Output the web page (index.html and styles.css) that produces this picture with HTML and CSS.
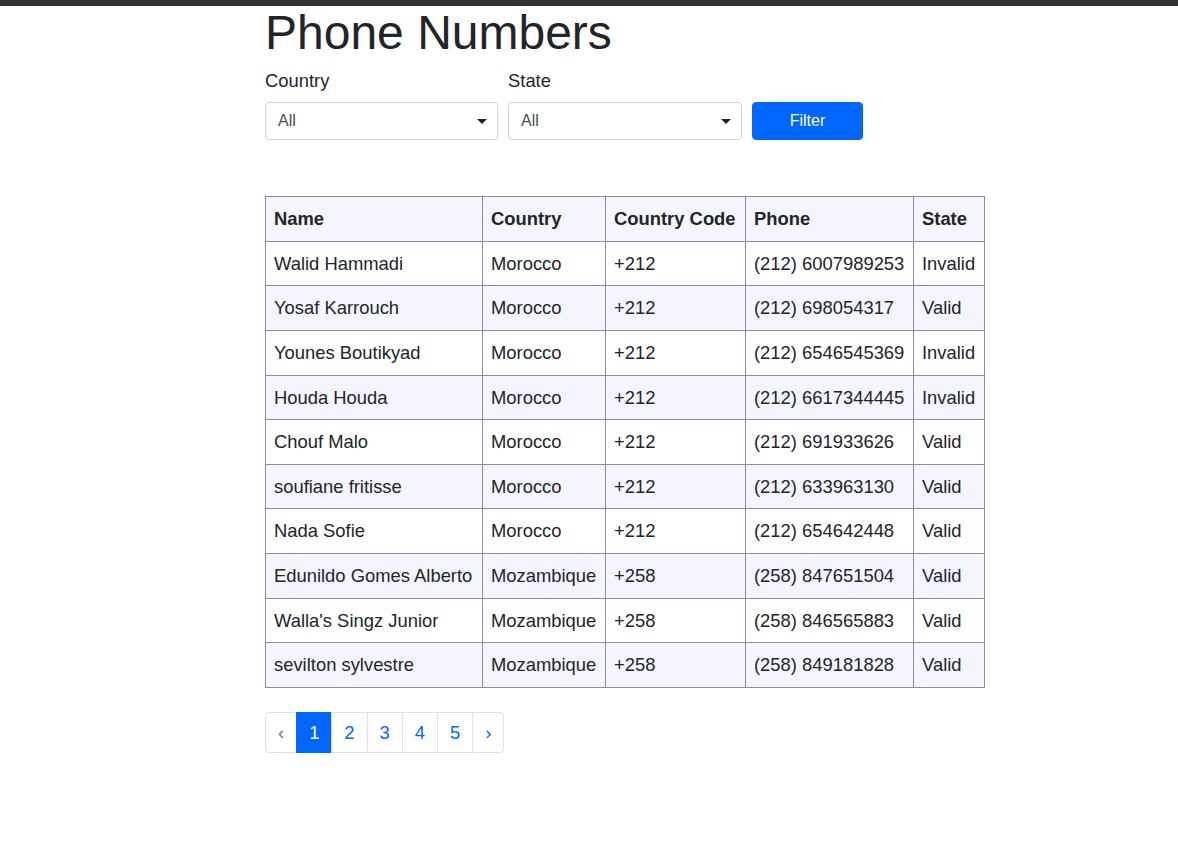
FILE: index.html
```html
<!DOCTYPE html>
<html lang="en">
<head>
<meta charset="utf-8">
<title>Phone Numbers</title>
<link rel="stylesheet" href="styles.css">
</head>
<body>
<div class="topbar"></div>
<main class="page">
  <h1 class="title">Phone Numbers</h1>
  <form class="filters">
    <div class="field">
      <label class="field-label">Country</label>
      <div class="select-wrap country">
        <select class="field-select"><option>All</option></select>
        <svg class="select-caret" width="10" height="5" viewBox="0 0 10 5"><path d="M0 0H10L5 5Z" fill="#222"/></svg>
      </div>
    </div>
    <div class="field">
      <label class="field-label">State</label>
      <div class="select-wrap state">
        <select class="field-select"><option>All</option></select>
        <svg class="select-caret" width="10" height="5" viewBox="0 0 10 5"><path d="M0 0H10L5 5Z" fill="#222"/></svg>
      </div>
    </div>
    <button type="button" class="btn-filter">Filter</button>
  </form>

  <table class="numbers">
    <colgroup>
      <col class="c-name"><col class="c-country"><col class="c-code"><col class="c-phone"><col class="c-state">
    </colgroup>
    <thead>
      <tr><th>Name</th><th>Country</th><th>Country Code</th><th>Phone</th><th>State</th></tr>
    </thead>
    <tbody>
      <tr><td>Walid Hammadi</td><td>Morocco</td><td>+212</td><td>(212) 6007989253</td><td>Invalid</td></tr>
      <tr><td>Yosaf Karrouch</td><td>Morocco</td><td>+212</td><td>(212) 698054317</td><td>Valid</td></tr>
      <tr><td>Younes Boutikyad</td><td>Morocco</td><td>+212</td><td>(212) 6546545369</td><td>Invalid</td></tr>
      <tr><td>Houda Houda</td><td>Morocco</td><td>+212</td><td>(212) 6617344445</td><td>Invalid</td></tr>
      <tr><td>Chouf Malo</td><td>Morocco</td><td>+212</td><td>(212) 691933626</td><td>Valid</td></tr>
      <tr><td>soufiane fritisse</td><td>Morocco</td><td>+212</td><td>(212) 633963130</td><td>Valid</td></tr>
      <tr><td>Nada Sofie</td><td>Morocco</td><td>+212</td><td>(212) 654642448</td><td>Valid</td></tr>
      <tr><td>Edunildo Gomes Alberto</td><td>Mozambique</td><td>+258</td><td>(258) 847651504</td><td>Valid</td></tr>
      <tr><td>Walla's Singz Junior</td><td>Mozambique</td><td>+258</td><td>(258) 846565883</td><td>Valid</td></tr>
      <tr><td>sevilton sylvestre</td><td>Mozambique</td><td>+258</td><td>(258) 849181828</td><td>Valid</td></tr>
    </tbody>
  </table>

  <ul class="pagination">
    <li class="page-item disabled"><span class="page-link">‹</span></li>
    <li class="page-item active"><span class="page-link">1</span></li>
    <li class="page-item"><span class="page-link">2</span></li>
    <li class="page-item"><span class="page-link">3</span></li>
    <li class="page-item"><span class="page-link">4</span></li>
    <li class="page-item"><span class="page-link">5</span></li>
    <li class="page-item"><span class="page-link">›</span></li>
  </ul>
</main>
</body>
</html>
```

FILE: styles.css
```css
* { box-sizing: border-box; }

html, body {
  margin: 0;
  padding: 0;
  background: #fff;
}

body {
  font-family: "Liberation Sans", Arial, Helvetica, sans-serif;
  font-size: 18.4px;
  line-height: 1.5;
  color: #212529;
}

.topbar {
  height: 6px;
  background: #333333;
}

.page {
  padding-left: 265px;
}

.title {
  margin: -2px 0 5px 0;
  font-size: 48px;
  font-weight: 400;
  line-height: 1.2;
  color: #212529;
}

.filters {
  display: flex;
  align-items: flex-end;
  gap: 10px;
  margin: 0;
}

.field {
  display: flex;
  flex-direction: column;
}

.field-label {
  display: block;
  margin-bottom: 8px;
  line-height: 1.5;
}

.select-wrap {
  position: relative;
}

.select-wrap.country { width: 233px; }
.select-wrap.state { width: 234px; }

.field-select {
  display: block;
  width: 100%;
  height: 38px;
  padding: 6px 30px 6px 12px;
  font-family: inherit;
  font-size: 16px;
  line-height: 1.5;
  color: #495057;
  background-color: #fff;
  border: 1px solid #ced4da;
  border-radius: 4px;
  appearance: none;
  -webkit-appearance: none;
}

.select-caret {
  position: absolute;
  right: 11px;
  top: 17px;
  pointer-events: none;
}

.btn-filter {
  width: 111px;
  height: 38px;
  font-family: inherit;
  font-size: 16px;
  line-height: 1.5;
  color: #fff;
  background: #0066ff;
  border: 1px solid #0066ff;
  border-radius: 4px;
  padding: 6px 12px;
}

.numbers {
  margin-top: 56px;
  border-collapse: collapse;
  border: 1px solid #8c8aa8;
  table-layout: fixed;
  width: 719px;
}

.c-name { width: 217px; }
.c-country { width: 123px; }
.c-code { width: 140px; }
.c-phone { width: 168px; }
.c-state { width: 71px; }

.numbers th,
.numbers td {
  padding: 8px;
  border: 1px solid #8c8aa8;
  text-align: left;
  vertical-align: top;
  white-space: nowrap;
  line-height: 1.5;
}

.numbers th {
  font-weight: 700;
  background: #f5f5ff;
}

.numbers tbody tr:nth-child(even) td {
  background: #f5f5ff;
}

.pagination {
  display: flex;
  list-style: none;
  padding: 0;
  margin: 24px 0 0 0;
}

.page-link {
  display: block;
  padding: 8px 12px;
  line-height: 1.25;
  color: #0066ff;
  background: #fff;
  border: 1px solid #dee2e6;
  margin-left: -1px;
}

.page-item:first-child .page-link {
  margin-left: 0;
  border-radius: 4px 0 0 4px;
}

.page-item:last-child .page-link {
  border-radius: 0 4px 4px 0;
}

.page-item.active .page-link {
  color: #fff;
  background: #0066ff;
  border-color: #0066ff;
}

.page-item.disabled .page-link {
  color: #6c757d;
}
```
